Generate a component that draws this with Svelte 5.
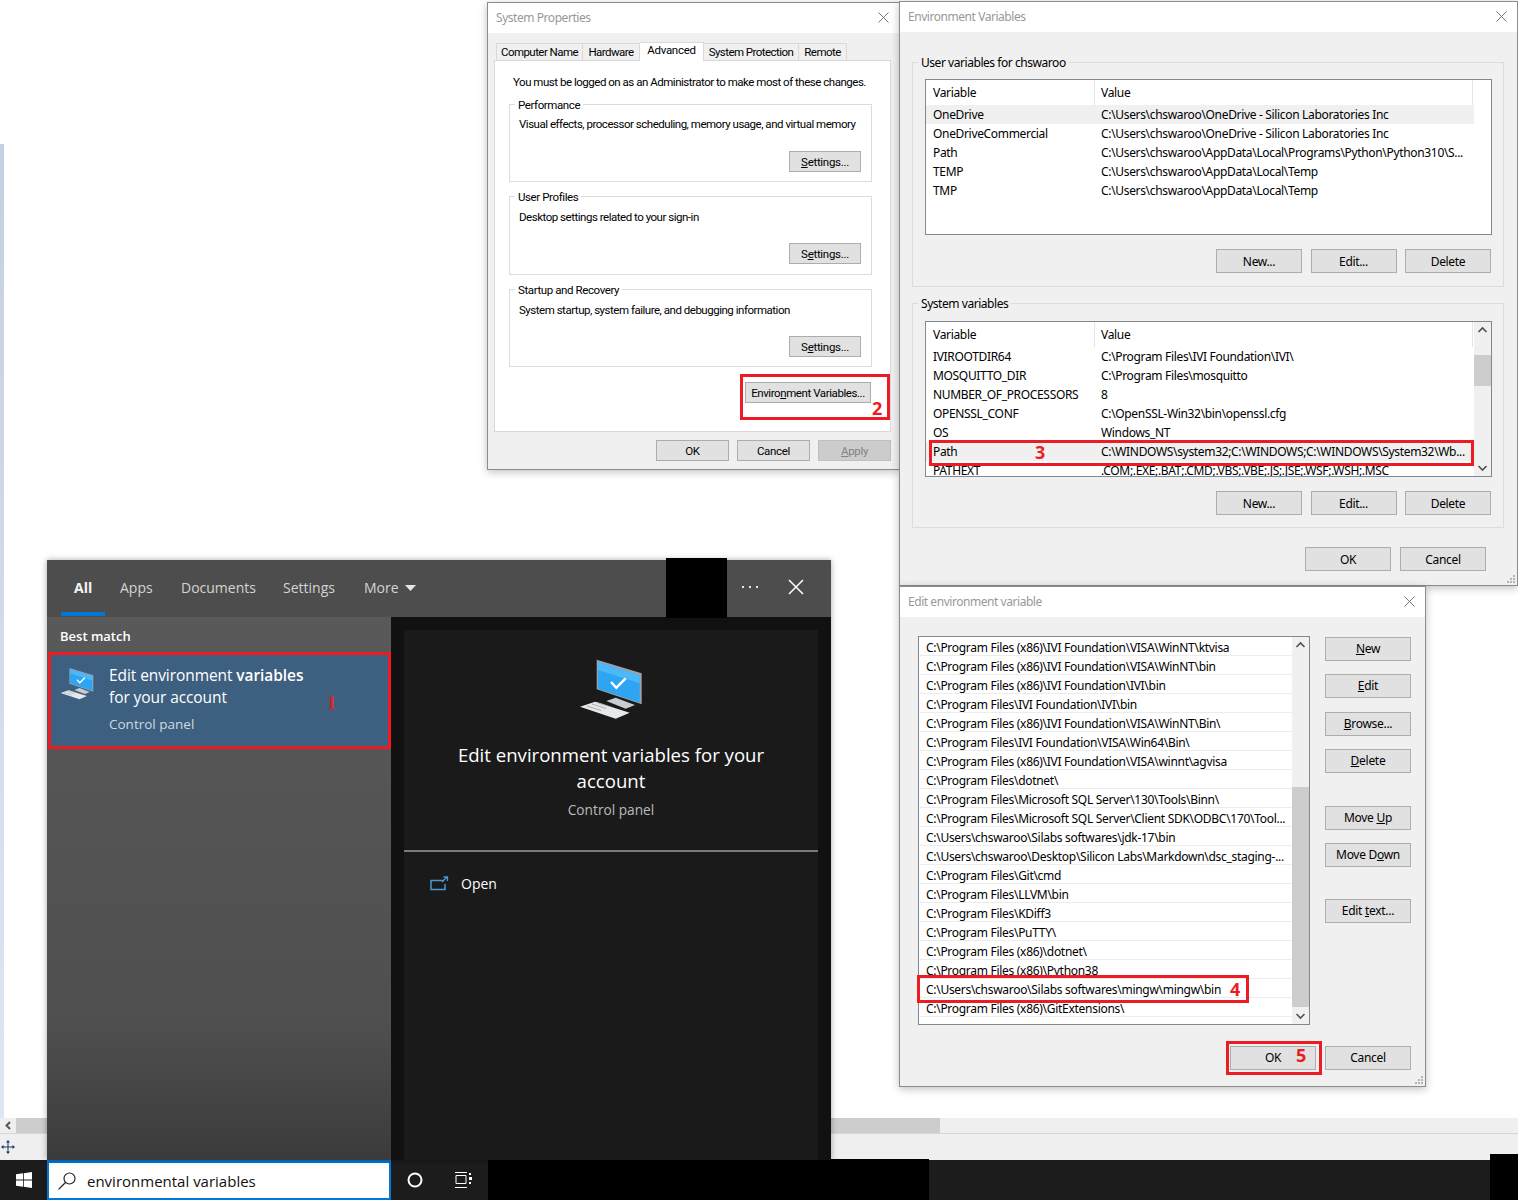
<script>
  const userVars = [
    ['OneDrive', 'C:\\Users\\chswaroo\\OneDrive - Silicon Laboratories Inc'],
    ['OneDriveCommercial', 'C:\\Users\\chswaroo\\OneDrive - Silicon Laboratories Inc'],
    ['Path', 'C:\\Users\\chswaroo\\AppData\\Local\\Programs\\Python\\Python310\\S...'],
    ['TEMP', 'C:\\Users\\chswaroo\\AppData\\Local\\Temp'],
    ['TMP', 'C:\\Users\\chswaroo\\AppData\\Local\\Temp']
  ];
  const sysVars = [
    ['IVIROOTDIR64', 'C:\\Program Files\\IVI Foundation\\IVI\\'],
    ['MOSQUITTO_DIR', 'C:\\Program Files\\mosquitto'],
    ['NUMBER_OF_PROCESSORS', '8'],
    ['OPENSSL_CONF', 'C:\\OpenSSL-Win32\\bin\\openssl.cfg'],
    ['OS', 'Windows_NT'],
    ['Path', 'C:\\WINDOWS\\system32;C:\\WINDOWS;C:\\WINDOWS\\System32\\Wb...'],
    ['PATHEXT', '.COM;.EXE;.BAT;.CMD;.VBS;.VBE;.JS;.JSE;.WSF;.WSH;.MSC']
  ];
  const paths = [
    'C:\\Program Files (x86)\\IVI Foundation\\VISA\\WinNT\\ktvisa',
    'C:\\Program Files (x86)\\IVI Foundation\\VISA\\WinNT\\bin',
    'C:\\Program Files (x86)\\IVI Foundation\\IVI\\bin',
    'C:\\Program Files\\IVI Foundation\\IVI\\bin',
    'C:\\Program Files (x86)\\IVI Foundation\\VISA\\WinNT\\Bin\\',
    'C:\\Program Files\\IVI Foundation\\VISA\\Win64\\Bin\\',
    'C:\\Program Files (x86)\\IVI Foundation\\VISA\\winnt\\agvisa',
    'C:\\Program Files\\dotnet\\',
    'C:\\Program Files\\Microsoft SQL Server\\130\\Tools\\Binn\\',
    'C:\\Program Files\\Microsoft SQL Server\\Client SDK\\ODBC\\170\\Tool...',
    'C:\\Users\\chswaroo\\Silabs softwares\\jdk-17\\bin',
    'C:\\Users\\chswaroo\\Desktop\\Silicon Labs\\Markdown\\dsc_staging-...',
    'C:\\Program Files\\Git\\cmd',
    'C:\\Program Files\\LLVM\\bin',
    'C:\\Program Files\\KDiff3',
    'C:\\Program Files\\PuTTY\\',
    'C:\\Program Files (x86)\\dotnet\\',
    'C:\\Program Files (x86)\\Python38',
    'C:\\Users\\chswaroo\\Silabs softwares\\mingw\\mingw\\bin',
    'C:\\Program Files (x86)\\GitExtensions\\'
  ];
  const groups = [
    { title: 'Performance', text: 'Visual effects, processor scheduling, memory usage, and virtual memory', pre: '', u: 'S', post: 'ettings...' },
    { title: 'User Profiles', text: 'Desktop settings related to your sign-in', pre: 'S', u: 'e', post: 'ttings...' },
    { title: 'Startup and Recovery', text: 'System startup, system failure, and debugging information', pre: 'S', u: 'e', post: 'ttings...' }
  ];
</script>

{#snippet closeIcon()}
  <svg class="close" width="11" height="11" viewBox="0 0 11 11"><path d="M.5.5l10 10M10.5.5l-10 10" /></svg>
{/snippet}

{#snippet upArrow()}
  <svg class="arrow" width="17" height="17" viewBox="0 0 17 17"><path d="M4.5 10l4-4 4 4" /></svg>
{/snippet}

{#snippet downArrow()}
  <svg class="arrow" width="17" height="17" viewBox="0 0 17 17"><path d="M4.5 7l4 4 4-4" /></svg>
{/snippet}

{#snippet grip()}
  <svg class="grip" width="10" height="10" viewBox="0 0 10 10"><path d="M7 1h2v2H7zM4 4h2v2H4zM7 4h2v2H7zM1 7h2v2H1zM4 7h2v2H4zM7 7h2v2H7z" /></svg>
{/snippet}

{#snippet pcIcon(cls)}
  <svg class={cls} viewBox="0 0 64 62">
    <path d="M27.3 43l9.4-3.3L56 47l-9.3 3.7z" fill="#c9cdd1" />
    <path d="M17.7 1.7l45 13.6v31l-45-15z" fill="#9aa3ab" />
    <path d="M19 4l41.7 13.3v27.4L19 30.7z" fill="#2da5f3" />
    <path d="M19 4l41.7 13.3v8L19 12z" fill="#4cb8f7" />
    <path d="M1 48.7l15-5 34.7 11-14 6z" fill="#e6e8ea" />
    <path d="M8 48l14 4.5M13 46l14 4.5M18 44.5l14 4.5" stroke="#a9aeb3" fill="none" />
    <path d="M32 24l5.3 5.7 9.4-9.4" stroke="#fff" stroke-width="2.4" fill="none" />
  </svg>
{/snippet}

<div class="desktop">
  <div class="page">
    <div class="content"><div class="strip"></div></div>
    <div class="hscroll">
      <svg class="hleft" width="16" height="15" viewBox="0 0 16 15"><path d="M10 4l-3.5 3.5L10 11" /></svg>
      <div class="hthumb"></div>
    </div>
    <div class="status">
      <svg width="14" height="14" viewBox="0 0 14 14"><path d="M7 1v12M1 7h12" stroke="#1f3864" fill="none" /><path d="M7 0l2 2.5H5zM7 14l2-2.5H5zM0 7l2.5-2v4zM14 7l-2.500-2v4z" fill="#1f3864" /></svg>
    </div>
    <div class="taskbar">
      <div class="start">
        <svg width="16" height="16" viewBox="0 0 16 16"><path d="M0 2.300l7-1v6.300H0zM7.800 1.200L16 0v7.600H7.800zM0 8.400h7v6.300l-7-1zM7.800 8.400H16V16l-8.200-1.200z" fill="#fff" /></svg>
      </div>
      <div class="searchbox">
        <svg width="18" height="18" viewBox="0 0 18 18"><circle cx="11.500" cy="6.500" r="5.500" fill="none" stroke="#222" stroke-width="1.200" /><path d="M7.500 10.500L.6 17.400" stroke="#222" stroke-width="1.300" /></svg>
        <span>environmental variables</span>
      </div>
      <div class="tray-btn cortana"><svg width="16" height="16" viewBox="0 0 16 16"><circle cx="8" cy="8" r="6.500" fill="none" stroke="#fff" stroke-width="2" /></svg></div>
      <div class="tray-btn">
        <svg width="17" height="16" viewBox="0 0 17 16"><path d="M0 .5h12M0 15.500h12M1 3.500h10v8H1z" fill="none" stroke="#fff" /><path d="M14 1h2v2h-2zM14 5h3v3h-3zM14 10h2v2h-2z" fill="#fff" /></svg>
      </div>
    </div>
  </div>

  <div class="blackout b-taskbar"></div>
  <div class="blackout b-corner"></div>

  <!-- System Properties -->
  <section class="win sys">
    <header class="title">System Properties {@render closeIcon()}</header>
    <div class="tabs">
      <span class="tab t1">Computer Name</span>
      <span class="tab t2">Hardware</span>
      <span class="tab t3 active">Advanced</span>
      <span class="tab t4">System Protection</span>
      <span class="tab t5">Remote</span>
    </div>
    <div class="tabpage">
      <p class="admin">You must be logged on as an Administrator to make most of these changes.</p>
      {#each groups as g}
        <fieldset class="group">
          <legend>{g.title}</legend>
          <div class="group-body">
            <p>{g.text}</p>
            <button class="btn settings">{g.pre}<u>{g.u}</u>{g.post}</button>
          </div>
        </fieldset>
      {/each}
      <div class="env-row"><button class="btn envbtn">Enviro<u>n</u>ment Variables...</button></div>
    </div>
    <div class="actions">
      <button class="btn w73">OK</button>
      <button class="btn w73">Cancel</button>
      <button class="btn w73 disabled"><u>A</u>pply</button>
    </div>
  </section>

  <!-- Environment Variables -->
  <section class="win env">
    <header class="title">Environment Variables {@render closeIcon()}</header>
    <div class="env-body">
      <fieldset class="env-group">
        <legend>User variables for chswaroo</legend>
        <div class="vars user">
          <div class="vars-main">
            <div class="vars-head"><span>Variable</span><span>Value</span></div>
            {#each userVars as row, i}
              <div class="vars-row" class:soft={i === 0}><span>{row[0]}</span><span>{row[1]}</span></div>
            {/each}
          </div>
        </div>
        <div class="env-btns">
          <button class="btn w86">New...</button>
          <button class="btn w86">Edit...</button>
          <button class="btn w86">Delete</button>
        </div>
      </fieldset>
      <fieldset class="env-group second">
        <legend>System variables</legend>
        <div class="vars system">
          <div class="vars-main">
            <div class="vars-head"><span>Variable</span><span>Value</span></div>
            {#each sysVars as row, i}
              <div class="vars-row" class:soft={i === 5}><span>{row[0]}</span><span>{row[1]}</span></div>
            {/each}
          </div>
          <div class="vscroll">
            {@render upArrow()}
            <div class="track"><div class="thumb thumb-sys"></div></div>
            {@render downArrow()}
          </div>
        </div>
        <div class="env-btns">
          <button class="btn w86">New...</button>
          <button class="btn w86">Edit...</button>
          <button class="btn w86">Delete</button>
        </div>
      </fieldset>
      <div class="env-actions">
        <button class="btn w86">OK</button>
        <button class="btn w86">Cancel</button>
      </div>
    </div>
    {@render grip()}
  </section>

  <!-- Edit environment variable -->
  <section class="win edit">
    <header class="title">Edit environment variable {@render closeIcon()}</header>
    <div class="edit-body">
      <div class="edit-main">
        <div class="pathlist">
          <div class="paths">
            {#each paths as p}
              <div class="path">{p}</div>
            {/each}
          </div>
          <div class="vscroll">
            {@render upArrow()}
            <div class="track"><div class="thumb thumb-edit"></div></div>
            {@render downArrow()}
          </div>
        </div>
        <div class="side">
          <button class="btn w86"><u>N</u>ew</button>
          <button class="btn w86"><u>E</u>dit</button>
          <button class="btn w86 gap-c"><u>B</u>rowse...</button>
          <button class="btn w86"><u>D</u>elete</button>
          <button class="btn w86 gap-a">Move <u>U</u>p</button>
          <button class="btn w86">Move D<u>o</u>wn</button>
          <button class="btn w86 gap-b">Edit <u>t</u>ext...</button>
        </div>
      </div>
      <div class="edit-actions">
        <button class="btn w86">OK</button>
        <button class="btn w86">Cancel</button>
      </div>
    </div>
    {@render grip()}
  </section>

  <!-- Start menu search -->
  <section class="search">
    <nav class="search-tabs">
      <span class="stab on">All</span>
      <span class="stab s-apps">Apps</span>
      <span class="stab s-docs">Documents</span>
      <span class="stab s-set">Settings</span>
      <span class="stab s-more">More <svg width="11" height="6" viewBox="0 0 11 6"><path d="M0 0h11L5.500 6z" fill="#e6e6e6" /></svg></span>
      <svg class="dots" width="16" height="2" viewBox="0 0 16 2"><path d="M0 0h2v2H0zM7 0h2v2H7zM14 0h2v2h-2z" fill="#e6e6e6" /></svg>
      <svg class="search-x" width="16" height="16" viewBox="0 0 16 16"><path d="M1 1l14 14M15 1L1 15" stroke="#fff" stroke-width="1.500" /></svg>
    </nav>
    <div class="search-body">
      <div class="results">
        <h3>Best match</h3>
        <div class="result">
          {@render pcIcon('pc-small')}
          <div class="result-text">
            <div class="r-title">Edit environment <b>variables</b><br />for your account</div>
            <div class="r-sub">Control panel</div>
          </div>
        </div>
      </div>
      <div class="detail-wrap">
        <div class="detail">
          <div class="detail-top">
            {@render pcIcon('pc-large')}
            <div class="d-title">Edit environment variables for your account</div>
            <div class="d-sub">Control panel</div>
          </div>
          <div class="open-row">
            <svg width="19" height="15" viewBox="0 0 19 15"><path d="M13.500 4.500H1v9h14V8" fill="none" stroke="#4a97d2" stroke-width="1.500" /><path d="M12 6l5-5M13.500 1h4v4" fill="none" stroke="#4a97d2" stroke-width="1.300" /></svg>
            <span>Open</span>
          </div>
        </div>
      </div>
    </div>
  </section>
  <div class="blackout b-search"></div>

  <!-- red annotations -->
  <div class="mark m1"></div><span class="num n1">1</span>
  <div class="mark m2"></div><span class="num n2">2</span>
  <div class="mark m3"></div><span class="num n3">3</span>
  <div class="mark m4"></div><span class="num n4">4</span>
  <div class="mark m5"></div><span class="num n5">5</span>
</div>

<style>
  :global(body) {
    margin: 0;
    background: #fff;
  }
  .desktop {
    position: relative;
    width: 1518px;
    height: 1200px;
    overflow: hidden;
    font-family: 'Noto Sans', sans-serif;
    font-size: 12px;
    color: #000;
  }
  .page {
    display: flex;
    flex-direction: column;
    height: 1200px;
  }
  .content {
    flex: 1;
    padding-top: 144px;
    display: flex;
  }
  .strip {
    width: 4px;
    background: linear-gradient(#c5cfe3, #dde6f2);
  }
  .hscroll {
    height: 15px;
    background: #efefef;
    display: flex;
    border-bottom: 1px solid #d6d6d6;
  }
  .hleft path {
    fill: none;
    stroke: #555;
    stroke-width: 2;
  }
  .hthumb {
    width: 924px;
    background: #cdcdcd;
  }
  .status {
    height: 26px;
    background: #efefef;
    padding: 6px 0 0 1px;
    box-sizing: border-box;
  }
  .taskbar {
    height: 40px;
    background: #1c1c1c;
    display: flex;
    align-items: center;
  }
  .start {
    width: 47px;
    display: flex;
    justify-content: center;
  }
  .searchbox {
    box-sizing: border-box;
    width: 344px;
    height: 40px;
    background: #fff;
    border: 2px solid #0078d7;
    border-top-width: 3px;
    display: flex;
    align-items: center;
    gap: 11px;
    padding-left: 9px;
    font-size: 15px;
    color: #111;
    font-family: 'Open Sans', sans-serif;
  }
  .tray-btn {
    width: 48px;
    display: flex;
    justify-content: center;
  }
  .blackout {
    position: absolute;
    background: #000;
  }
  .b-taskbar {
    left: 488px;
    top: 1159px;
    width: 441px;
    height: 41px;
  }
  .b-corner {
    left: 1490px;
    top: 1154px;
    width: 28px;
    height: 46px;
  }
  .b-search {
    left: 666px;
    top: 558px;
    width: 61px;
    height: 60px;
  }

  /* dialogs */
  .win {
    position: absolute;
    box-sizing: border-box;
    background: #f0f0f0;
    border: 1px solid #8c8c8c;
    box-shadow: 0 2px 8px rgba(0, 0, 0, 0.25);
  }
  .sys {
    left: 487px;
    top: 2px;
    width: 413px;
    height: 468px;
    font-family: 'Roboto', sans-serif;
    font-size: 11.5px;
    letter-spacing: -0.3px;
  }
  .env {
    left: 899px;
    top: 1px;
    width: 619px;
    height: 585px;
    letter-spacing: -0.33px;
  }
  .edit {
    left: 899px;
    top: 586px;
    width: 527px;
    height: 501px;
    letter-spacing: -0.29px;
  }
  .title {
    position: relative;
    height: 30px;
    background: #fff;
    color: #999;
    font-family: 'Noto Sans', sans-serif;
    font-size: 12px;
    line-height: 30px;
    padding-left: 8px;
    letter-spacing: -0.45px;
  }
  .close {
    position: absolute;
    right: 10px;
    top: 9px;
    fill: none;
    stroke: #777;
  }
  .grip {
    position: absolute;
    right: 1px;
    bottom: 1px;
    fill: #b5b5b5;
  }
  .btn {
    box-sizing: border-box;
    height: 24px;
    padding: 0;
    background: #e1e1e1;
    border: 1px solid #adadad;
    border-radius: 0;
    font: inherit;
    letter-spacing: inherit;
    color: #000;
    white-space: nowrap;
  }
  .w73 {
    width: 73px;
    height: 21px;
  }
  .w86 {
    width: 86px;
  }
  .edit .w86 {
    padding-bottom: 1px;
  }
  .disabled {
    background: #ccc;
    border-color: #bfbfbf;
    color: #838383;
  }

  /* system properties */
  .tabs {
    display: flex;
    align-items: flex-end;
    height: 18px;
    padding: 9px 0 0 8px;
  }
  .tab {
    box-sizing: border-box;
    height: 17px;
    line-height: 16px;
    text-align: center;
    white-space: nowrap;
    letter-spacing: -0.55px;
    background: #f0f0f0;
    border: 1px solid #d9d9d9;
    border-bottom: 0;
    border-left: 0;
  }
  .t1 {
    width: 87px;
    border-left: 1px solid #d9d9d9;
  }
  .t2 {
    width: 57px;
  }
  .t3 {
    width: 64px;
    letter-spacing: -0.3px;
  }
  .t4 {
    width: 95px;
  }
  .t5 {
    width: 48px;
  }
  .active {
    position: relative;
    height: 19px;
    line-height: 15px;
    background: #fff;
    margin-bottom: -1px;
  }
  .tabpage {
    box-sizing: border-box;
    width: 397px;
    height: 372px;
    margin-left: 6px;
    padding: 13px 18px 0 14px;
    background: #fff;
    border: 1px solid #d9d9d9;
  }
  .tabpage p {
    margin: 0;
    line-height: 16px;
    white-space: nowrap;
    letter-spacing: -0.48px;
  }
  .admin {
    padding-left: 4px;
  }
  .group {
    margin: 6px 0 0;
    padding: 0;
    min-width: 0;
    height: 86px;
    box-sizing: border-box;
    border: 1px solid #dcdcdc;
  }
  .group:nth-of-type(2) {
    height: 87px;
  }
  .group legend {
    position: relative;
    top: 1px;
    margin-left: 5px;
    padding: 0 3px;
    line-height: 16px;
    letter-spacing: -0.4px;
  }
  .env-group legend {
    position: relative;
    top: 1px;
    margin-left: -7px;
    padding: 0 3px;
    line-height: 16px;
    letter-spacing: -0.45px;
  }
  .group-body {
    display: flex;
    flex-direction: column;
    padding: 4px 10px 0 9px;
  }
  .group:nth-of-type(n + 2) .group-body {
    padding-top: 5px;
  }
  .settings {
    align-self: flex-end;
    width: 72px;
    height: 21px;
    margin-top: 19px;
  }
  .group:nth-of-type(n + 2) .settings {
    margin-top: 18px;
  }
  .env-row {
    display: flex;
    justify-content: flex-end;
    padding: 15px 1px 0 0;
  }
  .envbtn {
    width: 126px;
    height: 21px;
    letter-spacing: -0.42px;
  }
  .actions {
    display: flex;
    justify-content: flex-end;
    gap: 8px;
    padding: 8px 8px 0 0;
  }

  /* environment variables */
  .env-body {
    padding: 22px 13px 0 12px;
  }
  .env-group {
    box-sizing: border-box;
    height: 233px;
    margin: 0;
    padding: 0 12px;
    min-width: 0;
    border: 1px solid #dcdcdc;
  }
  .second {
    margin-top: 8px;
  }
  .vars {
    box-sizing: border-box;
    display: flex;
    width: 567px;
    height: 156px;
    margin-top: 9px;
    overflow: hidden;
    background: #fff;
    border: 1px solid #828790;
  }
  .system {
    margin-top: 10px;
  }
  .vars-main {
    width: 548px;
    flex: none;
  }
  .vars-head,
  .vars-row {
    display: grid;
    grid-template-columns: 169px 378px;
    white-space: nowrap;
  }
  .vars-head {
    height: 25px;
    line-height: 25px;
  }
  .vars-head span {
    padding-left: 7px;
    border-right: 1px solid #e5e5e5;
  }
  .vars-head span + span {
    padding-left: 6px;
  }
  .vars-row {
    height: 19px;
    line-height: 19px;
  }
  .vars-row span {
    padding-left: 7px;
  }
  .vars-row span + span {
    padding-left: 6px;
  }
  .soft {
    background: #f0f0f0;
  }
  .env-btns {
    display: flex;
    justify-content: flex-end;
    gap: 8.5px;
    margin-top: 14px;
  }
  .env-actions {
    display: flex;
    justify-content: flex-end;
    gap: 9px;
    padding: 19px 18px 0 0;
  }

  .vscroll {
    flex: 1;
    display: flex;
    flex-direction: column;
    background: #f0f0f0;
  }
  .arrow {
    flex: none;
    fill: none;
    stroke: #505050;
    stroke-width: 1.6;
  }
  .track {
    flex: 1;
    min-height: 0;
  }
  .thumb {
    background: #cdcdcd;
  }
  .thumb-sys {
    margin-top: 16px;
    height: 31px;
  }
  .thumb-edit {
    margin-top: 133px;
    height: 220px;
  }

  /* edit variable */
  .edit-body {
    padding: 19px 14px 0 18px;
  }
  .edit-main {
    display: flex;
    gap: 15px;
  }
  .pathlist {
    box-sizing: border-box;
    display: flex;
    width: 392px;
    height: 389px;
    background: #fff;
    border: 1px solid #828790;
  }
  .paths {
    width: 373px;
    flex: none;
  }
  .path {
    box-sizing: border-box;
    height: 19px;
    line-height: 18px;
    margin-left: 1px;
    padding: 2px 0 0 6px;
    white-space: nowrap;
    border-bottom: 1px solid #ececec;
  }
  .side {
    display: flex;
    flex-direction: column;
    gap: 13px;
    padding-top: 1px;
  }
  .gap-a {
    margin-top: 20px;
  }
  .gap-b {
    margin-top: 19px;
  }
  .gap-c {
    margin-top: 1px;
  }
  .edit-actions {
    display: flex;
    justify-content: flex-end;
    gap: 9px;
    margin-top: 21px;
  }

  /* search panel */
  .search {
    position: absolute;
    left: 47px;
    top: 560px;
    width: 784px;
    height: 600px;
    display: flex;
    flex-direction: column;
    font-family: 'Open Sans', sans-serif;
    color: #fff;
    box-shadow: 0 0 6px rgba(0, 0, 0, 0.35);
  }
  .search-tabs {
    position: relative;
    display: flex;
    align-items: center;
    height: 57px;
    flex: none;
    background: #4d4d4d;
    font-size: 14px;
    color: #d4d4d4;
  }
  .stab {
    position: absolute;
    top: 18px;
    line-height: 19px;
    white-space: nowrap;
  }
  .on {
    left: 27px;
    font-weight: 700;
    color: #f4f4f4;
  }
  .on::after {
    content: '';
    position: absolute;
    left: -13px;
    top: 34px;
    width: 44px;
    height: 4px;
    background: #0078d7;
  }
  .s-apps {
    left: 73px;
  }
  .s-docs {
    left: 134px;
  }
  .s-set {
    left: 236px;
  }
  .s-more {
    left: 317px;
  }
  .s-more svg {
    margin-left: 3px;
    vertical-align: 2px;
  }
  .dots {
    position: absolute;
    left: 695px;
    top: 26px;
  }
  .search-x {
    position: absolute;
    left: 741px;
    top: 19px;
  }
  .search-body {
    flex: 1;
    display: flex;
    min-height: 0;
  }
  .results {
    width: 344px;
    background: linear-gradient(#595959, #4f4f4f 75%, #3b3b3b);
  }
  .results h3 {
    margin: 0;
    height: 35px;
    padding-left: 13px;
    font-size: 13px;
    font-weight: 600;
    line-height: 38px;
  }
  .result {
    display: flex;
    height: 97px;
    box-sizing: border-box;
    margin: 0 1px;
    background: #3d5f80;
    padding: 12px 0 0 12px;
  }
  .pc-small {
    width: 34px;
    height: 33px;
    margin-top: 3px;
    flex: none;
  }
  .result-text {
    padding-left: 15px;
  }
  .r-title {
    font-size: 15.5px;
    line-height: 22px;
    white-space: nowrap;
    letter-spacing: -0.08px;
  }
  .r-title b {
    font-weight: 600;
  }
  .r-sub {
    margin-top: 7px;
    font-size: 13.5px;
    line-height: 18px;
    color: #d0d8e0;
  }
  .detail-wrap {
    flex: 1;
    background: #111;
    padding: 13px 13px 0;
  }
  .detail {
    height: 100%;
    background: #1a1a1a;
  }
  .detail-top {
    box-sizing: border-box;
    height: 222px;
    padding-top: 28px;
    text-align: center;
    border-bottom: 2px solid #7a7a7a;
  }
  .pc-large {
    display: block;
    width: 64px;
    height: 62px;
    margin: 0 0 0 175px;
  }
  .d-title {
    width: 340px;
    margin: 22px auto 0;
    font-size: 18.6px;
    line-height: 26px;
  }
  .d-sub {
    margin-top: 6px;
    font-size: 13.7px;
    line-height: 20px;
    color: #bbb;
  }
  .open-row {
    display: flex;
    align-items: center;
    gap: 12px;
    padding: 22px 0 0 26px;
    font-size: 14px;
  }

  /* annotations */
  .mark {
    position: absolute;
    box-sizing: border-box;
    border: 3px solid #ed1c24;
  }
  .m1 {
    left: 48px;
    top: 652px;
    width: 343px;
    height: 97px;
  }
  .m2 {
    left: 740px;
    top: 374px;
    width: 150px;
    height: 46px;
  }
  .m3 {
    left: 929px;
    top: 440px;
    width: 545px;
    height: 26px;
  }
  .m4 {
    left: 917px;
    top: 975px;
    width: 332px;
    height: 28px;
  }
  .m5 {
    left: 1226px;
    top: 1041px;
    width: 96px;
    height: 34px;
  }
  .num {
    position: absolute;
    font-family: 'Open Sans', sans-serif;
    font-weight: 700;
    font-size: 18px;
    line-height: 20px;
    color: #ed1c24;
  }
  .n1 {
    left: 327px;
    top: 693px;
    font-family: 'Liberation Serif', serif;
  }
  .n2 {
    left: 872px;
    top: 398px;
  }
  .n3 {
    left: 1035px;
    top: 442px;
  }
  .n4 {
    left: 1230px;
    top: 979px;
  }
  .n5 {
    left: 1296px;
    top: 1045px;
  }
</style>
